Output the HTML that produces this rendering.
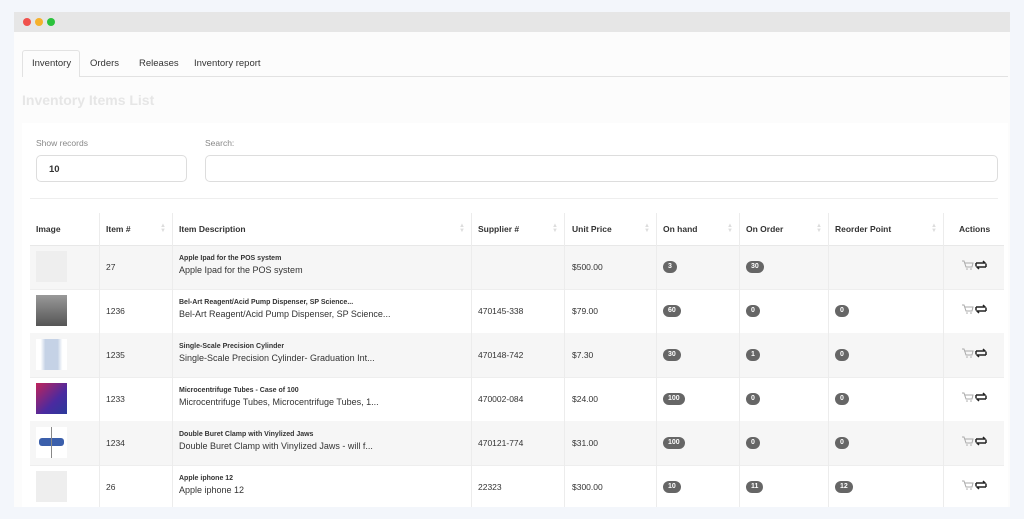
<!DOCTYPE html>
<html><head><style>
*{margin:0;padding:0;box-sizing:border-box}
body{width:1024px;height:519px;background:#f3f6fb;font-family:"Liberation Sans",sans-serif;position:relative;overflow:hidden;color:#333}
.win{position:absolute;left:14px;top:12px;width:996px;height:495px;background:#fcfcfc}
.bar{height:20px;background:#e6e6e6;position:relative}
.dot{position:absolute;top:6px;width:8px;height:8px;border-radius:50%}
.tab{position:absolute;top:51px;font-size:9.5px;color:#333}
.card{position:absolute;left:22px;top:123px;width:986px;height:384px;background:#fff}
.lbl{position:absolute;font-size:8.5px;color:#888}
.inp{position:absolute;border:1px solid #ddd;border-radius:5px;height:27px;font-size:9.5px;font-weight:bold;padding:8px 12px;color:#333}
.row{position:absolute;left:30px;width:974px;height:44px}
.c{position:absolute;font-size:8.5px;color:#333}
.th{position:absolute;top:224px;font-size:8.5px;font-weight:bold;color:#333}
.vl{position:absolute;top:213px;width:1px;height:294px;background:#ececec}
.b{display:inline-block;background:#666;color:#fff;font-size:7px;font-weight:bold;border-radius:6px;padding:2px 5px;line-height:8px;min-width:12px;text-align:center}
.th1{position:absolute;width:31px;height:31px;left:36px}
.ar{position:absolute;color:#ddd;font-size:6px;line-height:5px;top:224px}
</style></head><body>
<div class="win">
<div class="bar"><span class="dot" style="left:9px;background:#f0514c"></span><span class="dot" style="left:21px;background:#f5b12b"></span><span class="dot" style="left:33px;background:#2bc23c"></span></div>
</div>
<div style="position:absolute;left:22px;top:76px;width:986px;height:1px;background:#e2e2e2"></div>
<div style="position:absolute;left:22px;top:50px;width:58px;height:27px;border:1px solid #e2e2e2;border-bottom:none;background:#fcfcfc;border-radius:3px 3px 0 0"></div>
<div class="tab" style="left:32px;top:58px">Inventory</div>
<div class="tab" style="left:90px;top:58px">Orders</div>
<div class="tab" style="left:139px;top:58px">Releases</div>
<div class="tab" style="left:194px;top:58px">Inventory report</div>
<div style="position:absolute;left:22px;top:92px;font-size:14px;font-weight:bold;color:#e6e6e6">Inventory Items List</div>
<div class="card"></div>
<div class="lbl" style="left:36px;top:138px">Show records</div>
<div class="lbl" style="left:205px;top:138px">Search:</div>
<div class="inp" style="left:36px;top:155px;width:151px">10</div>
<div class="inp" style="left:205px;top:155px;width:793px"></div>
<div style="position:absolute;left:30px;top:198px;width:968px;height:1px;background:#eee"></div>

<div class="row" style="top:245px;background:#f6f6f6"></div>
<div class="row" style="top:333px;background:#f6f6f6"></div>
<div class="row" style="top:421px;background:#f6f6f6"></div>
<div style="position:absolute;left:30px;top:245px;width:974px;height:1px;background:#e8e8e8"></div>
<div style="position:absolute;left:30px;top:289px;width:974px;height:1px;background:#eee"></div>
<div style="position:absolute;left:30px;top:377px;width:974px;height:1px;background:#eee"></div>
<div style="position:absolute;left:30px;top:465px;width:974px;height:1px;background:#eee"></div>

<div class="vl" style="left:99px"></div><div class="vl" style="left:172px"></div><div class="vl" style="left:471px"></div><div class="vl" style="left:564px"></div><div class="vl" style="left:656px"></div><div class="vl" style="left:739px"></div><div class="vl" style="left:828px"></div><div class="vl" style="left:943px"></div>

<div class="th" style="left:36px">Image</div>
<div class="th" style="left:106px">Item #</div><div class="ar" style="left:160px">▲<br>▼</div>
<div class="th" style="left:179px">Item Description</div><div class="ar" style="left:459px">▲<br>▼</div>
<div class="th" style="left:478px">Supplier #</div><div class="ar" style="left:552px">▲<br>▼</div>
<div class="th" style="left:572px">Unit Price</div><div class="ar" style="left:644px">▲<br>▼</div>
<div class="th" style="left:663px">On hand</div><div class="ar" style="left:727px">▲<br>▼</div>
<div class="th" style="left:746px">On Order</div><div class="ar" style="left:816px">▲<br>▼</div>
<div class="th" style="left:835px">Reorder Point</div><div class="ar" style="left:931px">▲<br>▼</div>
<div class="th" style="left:959px">Actions</div>

<div class="th1" style="top:251px;background:#eee"></div>
<div class="th1" style="top:295px;background:linear-gradient(#999,#555)"></div>
<div class="th1" style="top:339px;background:linear-gradient(90deg,#fff 15%,#c5d2e6 30%,#c5d2e6 70%,#fff 85%)"></div>
<div class="th1" style="top:383px;background:linear-gradient(135deg,#c0245a,#4a2aa0 60%,#2a3a9a)"></div>
<div class="th1" style="top:427px;background:#fff"><div style="position:absolute;left:3px;top:11px;width:25px;height:8px;background:#3b5fab;border-radius:3px"></div><div style="position:absolute;left:15px;top:0;width:1px;height:31px;background:#888"></div></div>
<div class="th1" style="top:471px;background:#eee"></div>

<div class="c" style="left:106px;top:262px">27</div>
<div class="c" style="left:179px;top:255px;font-size:7px;font-weight:bold">Apple Ipad for the POS system</div>
<div class="c" style="left:179px;top:265px;font-size:9px">Apple Ipad for the POS system</div>
<div class="c" style="left:572px;top:262px">$500.00</div>
<div class="c" style="left:663px;top:260px"><span class="b">3</span></div>
<div class="c" style="left:746px;top:260px"><span class="b">30</span></div>

<div class="c" style="left:106px;top:306px">1236</div>
<div class="c" style="left:179px;top:299px;font-size:7px;font-weight:bold">Bel-Art Reagent/Acid Pump Dispenser, SP Science...</div>
<div class="c" style="left:179px;top:309px;font-size:9px">Bel-Art Reagent/Acid Pump Dispenser, SP Science...</div>
<div class="c" style="left:478px;top:306px">470145-338</div>
<div class="c" style="left:572px;top:306px">$79.00</div>
<div class="c" style="left:663px;top:304px"><span class="b">60</span></div>
<div class="c" style="left:746px;top:304px"><span class="b">0</span></div>
<div class="c" style="left:835px;top:304px"><span class="b">0</span></div>

<div class="c" style="left:106px;top:350px">1235</div>
<div class="c" style="left:179px;top:343px;font-size:7px;font-weight:bold">Single-Scale Precision Cylinder</div>
<div class="c" style="left:179px;top:353px;font-size:9px">Single-Scale Precision Cylinder- Graduation Int...</div>
<div class="c" style="left:478px;top:350px">470148-742</div>
<div class="c" style="left:572px;top:350px">$7.30</div>
<div class="c" style="left:663px;top:348px"><span class="b">30</span></div>
<div class="c" style="left:746px;top:348px"><span class="b">1</span></div>
<div class="c" style="left:835px;top:348px"><span class="b">0</span></div>

<div class="c" style="left:106px;top:394px">1233</div>
<div class="c" style="left:179px;top:387px;font-size:7px;font-weight:bold">Microcentrifuge Tubes - Case of 100</div>
<div class="c" style="left:179px;top:397px;font-size:9px">Microcentrifuge Tubes, Microcentrifuge Tubes, 1...</div>
<div class="c" style="left:478px;top:394px">470002-084</div>
<div class="c" style="left:572px;top:394px">$24.00</div>
<div class="c" style="left:663px;top:392px"><span class="b">100</span></div>
<div class="c" style="left:746px;top:392px"><span class="b">0</span></div>
<div class="c" style="left:835px;top:392px"><span class="b">0</span></div>

<div class="c" style="left:106px;top:438px">1234</div>
<div class="c" style="left:179px;top:431px;font-size:7px;font-weight:bold">Double Buret Clamp with Vinylized Jaws</div>
<div class="c" style="left:179px;top:441px;font-size:9px">Double Buret Clamp with Vinylized Jaws - will f...</div>
<div class="c" style="left:478px;top:438px">470121-774</div>
<div class="c" style="left:572px;top:438px">$31.00</div>
<div class="c" style="left:663px;top:436px"><span class="b">100</span></div>
<div class="c" style="left:746px;top:436px"><span class="b">0</span></div>
<div class="c" style="left:835px;top:436px"><span class="b">0</span></div>

<div class="c" style="left:106px;top:482px">26</div>
<div class="c" style="left:179px;top:475px;font-size:7px;font-weight:bold">Apple iphone 12</div>
<div class="c" style="left:179px;top:485px;font-size:9px">Apple iphone 12</div>
<div class="c" style="left:478px;top:482px">22323</div>
<div class="c" style="left:572px;top:482px">$300.00</div>
<div class="c" style="left:663px;top:480px"><span class="b">10</span></div>
<div class="c" style="left:746px;top:480px"><span class="b">11</span></div>
<div class="c" style="left:835px;top:480px"><span class="b">12</span></div>

<svg style="position:absolute;left:0;top:0" width="1024" height="519">
<g id="a">
<path d="M962 261h2l2 6h6l1-4h-8" fill="none" stroke="#aaa" stroke-width="1"/><circle cx="967" cy="269" r="0.8" fill="#aaa"/><circle cx="971" cy="269" r="0.8" fill="#aaa"/>
<path d="M976 263h9l-2-2M986 267h-9l2 2M976 263v3M986 267v-3" fill="none" stroke="#222" stroke-width="1.5"/>
</g>
<use href="#a" y="44"/><use href="#a" y="88"/><use href="#a" y="132"/><use href="#a" y="176"/><use href="#a" y="220"/>
</svg>
</body></html>
